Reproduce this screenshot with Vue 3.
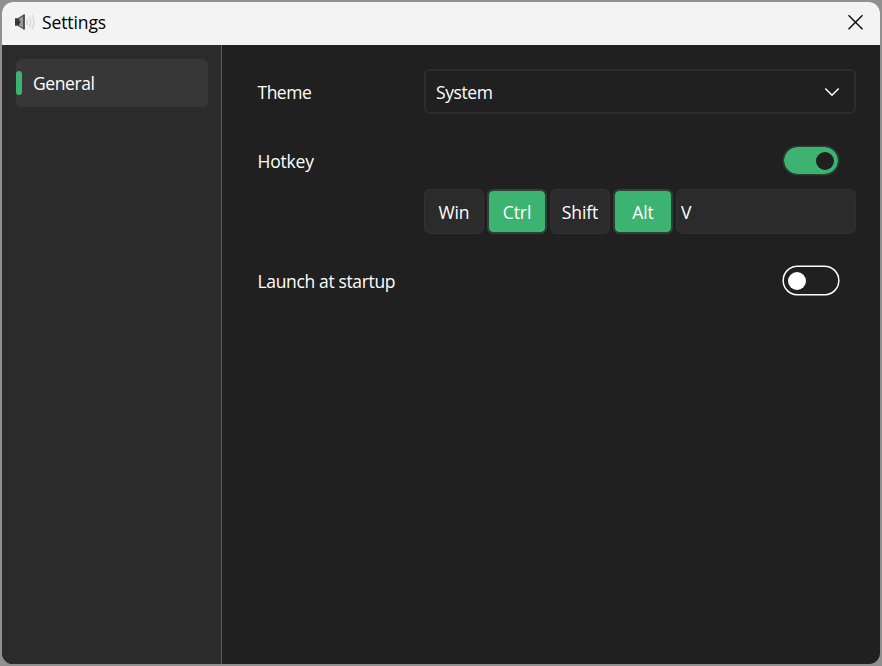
<script setup>
import { ref } from 'vue'

const hotkeyOn = ref(true)
const startupOn = ref(false)
const keys = ref([
  { name: 'Win', on: false },
  { name: 'Ctrl', on: true },
  { name: 'Shift', on: false },
  { name: 'Alt', on: true },
])
</script>

<template>
  <div class="desktop">
    <div class="window">
      <header class="titlebar">
        <svg class="app-icon" width="22" height="18" viewBox="0 0 22 18">
          <path d="M1 5.300h4v7.400H1z" fill="#3a3a3a" />
          <path d="M4.500 5.300L10 2v14l-5.500-3.300z" fill="#999" stroke="#555" stroke-width="1.200" />
          <path d="M4 5.300l2.500 3.700L4 12.700z" fill="#333" />
          <path d="M10 1.800v14.400" stroke="#444" stroke-width="1.500" />
          <g fill="none" stroke="#d8d8d8" stroke-width="1.500">
            <path d="M12.500 6q2 3 0 6" />
            <path d="M15.200 4.200q3 4.800 0 9.600" />
            <path d="M18 2.200q4 6.800 0 13.600" />
          </g>
        </svg>
        <span class="title">Settings</span>
        <svg class="close" width="16" height="16" viewBox="0 0 16 16">
          <path d="M.5 1.300l14 14M14.500 1.300l-14 14" stroke="#111" stroke-width="1.500" />
        </svg>
      </header>
      <div class="body">
        <nav class="sidebar">
          <div class="nav-item"><i class="accent"></i><span class="t-general">General</span></div>
        </nav>
        <main class="content">
          <div class="row theme">
            <span class="t-theme">Theme</span>
            <div class="select">
              <span class="t-system">System</span>
              <svg width="16" height="10" viewBox="0 0 16 10">
                <path d="M1.300 1.500L8 8.200l6.700-6.700" fill="none" stroke="#fff" stroke-width="1.500" />
              </svg>
            </div>
          </div>
          <div class="row hotkey">
            <span class="t-hotkey">Hotkey</span>
            <button class="toggle" :class="{ on: hotkeyOn }" @click="hotkeyOn = !hotkeyOn"><i></i></button>
          </div>
          <div class="keys">
            <button v-for="k in keys" :key="k.name" class="key" :class="{ on: k.on }" @click="k.on = !k.on">{{ k.name }}</button>
            <div class="key-input">V</div>
          </div>
          <div class="row startup">
            <span class="t-launch">Launch at startup</span>
            <button class="toggle" :class="{ on: startupOn }" @click="startupOn = !startupOn"><i></i></button>
          </div>
        </main>
      </div>
    </div>
  </div>
</template>

<style>
body { margin: 0; background: #909090; }
</style>

<style scoped>
* { box-sizing: border-box; }
.desktop {
  width: 882px;
  height: 666px;
  padding: 2px;
  background: #909090;
  font-family: "Open Sans", "Noto Sans", sans-serif;
  font-size: 17.5px;
  line-height: 24px;
  color: #fff;
}
.window {
  height: 662px;
  width: 878px;
  border-radius: 11px;
  overflow: hidden;
  background: #202020;
  display: flex;
  flex-direction: column;
}
.titlebar {
  height: 43px;
  flex: none;
  background: #f3f3f3;
  color: #000;
  display: flex;
  align-items: center;
  padding: 0 16px 3px 12px;
}
.app-icon { margin-right: 6px; }
.title { flex: 1; letter-spacing: -0.1px; }
.body { flex: 1; display: flex; }
.sidebar {
  width: 220px;
  background: #2b2b2b;
  border-right: 1px solid #5c5c5c;
  padding: 14px 13px 0 14px;
}
.nav-item {
  height: 48px;
  border-radius: 6px;
  background: #373737;
  display: flex;
  align-items: center;
  gap: 11px;
}
.t-general { letter-spacing: -0.4px; }
.t-theme { letter-spacing: -0.5px; }
.t-launch { letter-spacing: -0.35px; }
.t-system { letter-spacing: -0.4px; }
.t-hotkey { letter-spacing: -0.2px; }
.accent { width: 6px; height: 24px; border-radius: 3px; background: #3cb371; }
.content { flex: 1; padding: 24px 24px 0 35.5px; }
.row { display: flex; align-items: center; justify-content: space-between; }
.select {
  width: 432px;
  height: 45px;
  border: 2px solid #2d2d2d;
  border-radius: 6px;
  display: flex;
  align-items: center;
  justify-content: space-between;
  padding: 1px 14px 0 10px;
}
.hotkey { height: 31px; margin-top: 31px; padding-right: 16px; }
button { font: inherit; color: inherit; padding: 0; }
.toggle {
  width: 58px;
  height: 31px;
  border-radius: 16px;
  border: 0;
  box-shadow: inset 0 0 0 1.900px #fff;
  background: transparent;
  display: flex;
  align-items: center;
  padding: 0 6px;
  clip-path: inset(0.4px round 16px);
}
.toggle i { width: 18px; height: 18px; border-radius: 50%; background: #fff; }
.toggle.on {
  border: 2px solid #2d3b33;
  box-shadow: none;
  padding: 0 4.500px;
  background: #3cb371;
  background-clip: padding-box;
  justify-content: flex-end;
}
.toggle.on i { background: #202020; }
.keys { display: flex; gap: 4px; margin-top: 13px; padding-left: 166.5px; }
.key {
  width: 60px;
  height: 45px;
  border: 1px solid #333;
  border-radius: 6px;
  background: #2b2b2b;
  letter-spacing: -0.1px;
}
.key.on { margin: 0 -1px; border: 2px solid #2d4236; background: #3cb371; background-clip: padding-box; }
.key-input {
  flex: 1;
  height: 45px;
  border: 1px solid #303030;
  border-radius: 6px;
  background: #2b2b2b;
  padding: 10px 4px;
}
.startup { height: 31px; margin-top: 31px; padding-right: 16px; }
</style>
